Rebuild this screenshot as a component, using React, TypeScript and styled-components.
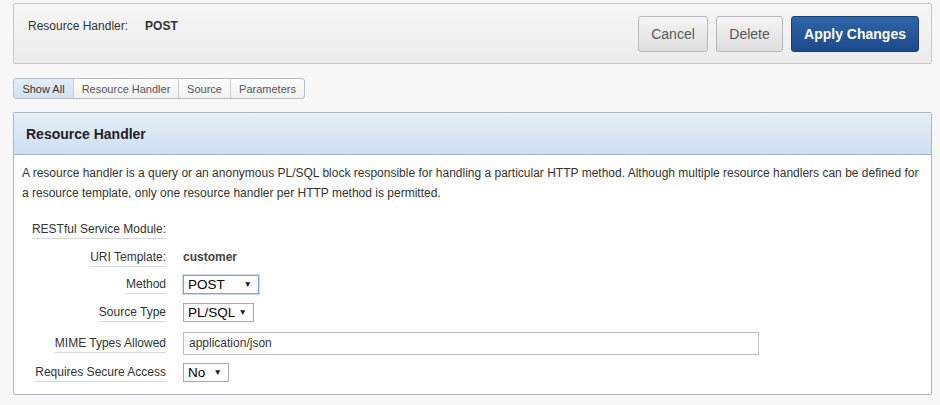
import React from "react";
import styled, { createGlobalStyle } from "styled-components";

const GlobalStyle = createGlobalStyle`
  html, body {
    margin: 0;
    padding: 0;
    background: #f7f7f7;
    font-family: "Liberation Sans", Arial, sans-serif;
    color: #333;
  }
`;

const Page = styled.div`
  width: 919px;
  padding: 3px 0 0 13px;
`;

const TopBar = styled.div`
  box-sizing: border-box;
  height: 61px;
  border: 1px solid #c6c6c6;
  border-radius: 2px;
  background: linear-gradient(#f6f6f6, #ececec);
  display: flex;
  justify-content: space-between;
  align-items: flex-start;
  padding: 12px 12px 0 14px;
`;

const TitleGroup = styled.div`
  display: flex;
  gap: 17px;
  font-size: 12px;
  line-height: 14px;
  padding-top: 3px;
`;

const TitleLabel = styled.span`
  color: #333;
`;

const TitleValue = styled.span`
  font-weight: bold;
  color: #333;
`;

const ButtonRow = styled.div`
  display: flex;
  gap: 8px;
`;

const Button = styled.button<{ $primary?: boolean; $w: number }>`
  box-sizing: border-box;
  width: ${(p) => p.$w}px;
  height: 36px;
  border-radius: 3px;
  font-family: "Liberation Sans", Arial, sans-serif;
  font-size: 14px;
  padding: 0;
  cursor: pointer;
  border: 1px solid ${(p) => (p.$primary ? "#1b3f6e" : "#b9b9b9")};
  background: ${(p) =>
    p.$primary
      ? "linear-gradient(#2f65a9, #1c4a8b)"
      : "linear-gradient(#f4f4f4, #dedede)"};
  color: ${(p) => (p.$primary ? "#fff" : "#595959")};
  font-weight: ${(p) => (p.$primary ? "bold" : "normal")};
`;

const Tabs = styled.div`
  display: inline-flex;
  margin-top: 14px;
  height: 21px;
  box-sizing: border-box;
  border: 1px solid #b9bec4;
  border-radius: 3px;
  overflow: hidden;
  background: linear-gradient(#fdfdfd, #f1f1f1);
`;

const Tab = styled.div<{ $active?: boolean; $w: number }>`
  box-sizing: border-box;
  width: ${(p) => p.$w}px;
  display: flex;
  align-items: center;
  justify-content: center;
  font-size: 11px;
  color: ${(p) => (p.$active ? "#333" : "#555")};
  background: ${(p) => (p.$active ? "linear-gradient(#e4edf8, #d2e1f2)" : "transparent")};
  & + & {
    border-left: 1px solid #c9cdd2;
  }
`;

const Region = styled.div`
  margin-top: 13px;
  box-sizing: border-box;
  height: 283px;
  border: 1px solid #b1b5ba;
  border-radius: 2px;
  background: #fff;
  overflow: hidden;
`;

const RegionHeader = styled.div`
  box-sizing: border-box;
  height: 42px;
  background: linear-gradient(#e5eef9, #cedff2);
  border-bottom: 1px solid #a7b2bf;
  display: flex;
  align-items: center;
  padding-left: 12px;
  font-size: 14px;
  font-weight: bold;
  color: #222;
`;

const Description = styled.p`
  margin: 0;
  padding: 8px 8px 0 8px;
  font-size: 12px;
  line-height: 20px;
  color: #333;
`;

const Form = styled.div`
  margin-top: 12px;
  display: flex;
  flex-direction: column;
`;

const Row = styled.div<{ $h: number }>`
  height: ${(p) => p.$h}px;
  display: grid;
  grid-template-columns: 152px 1fr;
  column-gap: 17px;
  align-items: center;
`;

const Label = styled.div`
  justify-self: end;
  margin-top: 3px;
  font-size: 12px;
  line-height: 15px;
  color: #333;
  border-bottom: 1px solid #d8d8d8;
  padding-bottom: 1px;
  white-space: nowrap;
`;

const Display = styled.div`
  font-size: 12px;
  font-weight: bold;
  color: #444;
`;

const SelectBox = styled.div<{ $w: number; $focus?: boolean }>`
  box-sizing: border-box;
  width: ${(p) => p.$w}px;
  height: 19px;
  border: 1px solid ${(p) => (p.$focus ? "#7ea7d9" : "#a9a9a9")};
  box-shadow: ${(p) => (p.$focus ? "0 0 0 1px #c6daf2" : "none")};
  background: #fff;
  display: flex;
  align-items: center;
  justify-content: space-between;
  padding: 0 6px 0 4px;
  font-size: 13.5px;
  color: #000;
`;

const Arrow = styled.span`
  font-size: 8.5px;
  color: #222;
`;

const TextInput = styled.div`
  box-sizing: border-box;
  width: 576px;
  height: 23px;
  border: 1px solid #bdbdbd;
  display: flex;
  align-items: center;
  padding-left: 5px;
  font-size: 12px;
  color: #333;
`;

export default function App() {
  return (
    <>
      <GlobalStyle />
      <Page>
        <TopBar>
          <TitleGroup>
            <TitleLabel>Resource Handler:</TitleLabel>
            <TitleValue>POST</TitleValue>
          </TitleGroup>
          <ButtonRow>
            <Button $w={70}>Cancel</Button>
            <Button $w={67}>Delete</Button>
            <Button $w={128} $primary>
              Apply Changes
            </Button>
          </ButtonRow>
        </TopBar>
        <Tabs>
          <Tab $w={59} $active>
            Show All
          </Tab>
          <Tab $w={105}>Resource Handler</Tab>
          <Tab $w={52}>Source</Tab>
          <Tab $w={74}>Parameters</Tab>
        </Tabs>
        <Region>
          <RegionHeader>Resource Handler</RegionHeader>
          <Description>
            A resource handler is a query or an anonymous PL/SQL block responsible for handling a particular HTTP
            method. Although multiple resource handlers can be defined for a resource template, only one resource
            handler per HTTP method is permitted.
          </Description>
          <Form>
            <Row $h={28}>
              <Label>RESTful Service Module:</Label>
              <div />
            </Row>
            <Row $h={27}>
              <Label>URI Template:</Label>
              <Display>customer</Display>
            </Row>
            <Row $h={28}>
              <Label>Method</Label>
              <SelectBox $w={76} $focus>
                <span>POST</span>
                <Arrow>▼</Arrow>
              </SelectBox>
            </Row>
            <Row $h={28}>
              <Label>Source Type</Label>
              <SelectBox $w={71}>
                <span>PL/SQL</span>
                <Arrow>▼</Arrow>
              </SelectBox>
            </Row>
            <Row $h={34}>
              <Label>MIME Types Allowed</Label>
              <TextInput>application/json</TextInput>
            </Row>
            <Row $h={24}>
              <Label>Requires Secure Access</Label>
              <SelectBox $w={46}>
                <span>No</span>
                <Arrow>▼</Arrow>
              </SelectBox>
            </Row>
          </Form>
        </Region>
      </Page>
    </>
  );
}
